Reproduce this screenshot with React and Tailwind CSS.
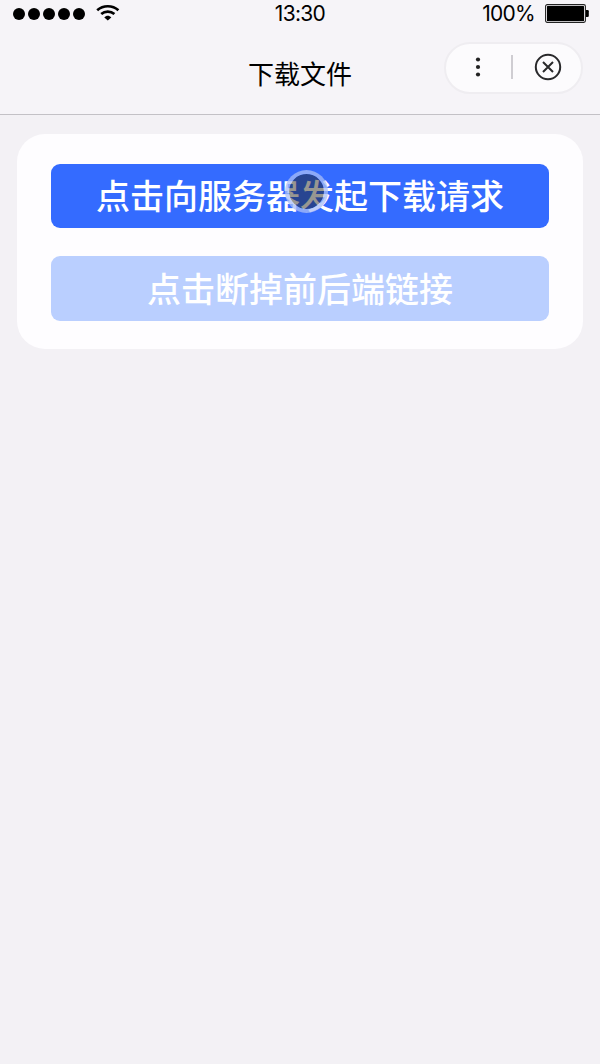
import React from "react";

const WifiIcon = () => (
  <svg width="24" height="18" viewBox="0 0 24 18" fill="none">
    <path d="M1.2 6.2C7.2 0.9 16.4 0.9 22.4 6.2" stroke="#000" strokeWidth="2.7" />
    <path d="M5.2 10C9 6.8 14.6 6.8 18.4 10" stroke="#000" strokeWidth="2.7" />
    <path d="M8.3 13.4C10.3 11.3 13.3 11.3 15.3 13.4L11.8 16.6Z" fill="#000" />
  </svg>
);

const BatteryIcon = () => (
  <svg width="45" height="20" viewBox="0 0 45 20" fill="none">
    <rect x="0.6" y="0.6" width="39.8" height="17.8" rx="1.6" stroke="#222" strokeWidth="1.1" />
    <rect x="2" y="2" width="37" height="15" rx="0.5" fill="#000" />
    <path d="M41 6h1.6q1.2 0 1.2 1.2v4.6q0 1.2-1.2 1.2H41z" fill="#000" />
  </svg>
);

const StatusBar = () => (
  <div className="grid h-7 grid-cols-3 items-center text-[21px] leading-7 tracking-[-0.7px] text-black">
    <div className="flex items-center pl-[13px]">
      <div className="-mt-px flex gap-[3px]">
        {[0, 1, 2, 3, 4].map((dot) => (
          <span key={dot} className="h-3 w-3 rounded-full bg-black"></span>
        ))}
      </div>
      <div className="ml-[11px] -mt-[3px]">
        <WifiIcon />
      </div>
    </div>
    <div className="text-center">13:30</div>
    <div className="flex items-center justify-end gap-[10px] pr-[10px]">
      <span>100%</span>
      <BatteryIcon />
    </div>
  </div>
);

const Capsule = () => (
  <div className="flex h-[52px] w-[139px] items-center rounded-full border-2 border-[#efedf1] bg-[#fcfbfd] pb-[2px]">
    <button className="flex w-[65px] justify-center pr-[2px]">
      <svg width="6" height="20" viewBox="0 0 6 20" fill="#222">
        <circle cx="3" cy="2.5" r="2.1" />
        <circle cx="3" cy="10" r="2.1" />
        <circle cx="3" cy="17.5" r="2.1" />
      </svg>
    </button>
    <span className="h-6 w-[1.5px] bg-[#cfcdd2]"></span>
    <button className="flex flex-1 justify-center pl-[3px]">
      <svg width="28" height="28" viewBox="0 0 28 28" fill="none" stroke="#29292b" strokeWidth="2">
        <circle cx="14" cy="14" r="12.2" />
        <path d="M9 9l10 10M19 9L9 19" />
      </svg>
    </button>
  </div>
);

const NavBar = () => (
  <div className="grid h-[87px] grid-cols-[1fr_auto_1fr] items-start border-b border-[#c3c1c6]">
    <span></span>
    <h1 className="pt-[28px] text-[26px] leading-[38px] text-black">下载文件</h1>
    <div className="flex justify-end pt-[14px] pr-[17px]">
      <Capsule />
    </div>
  </div>
);

const App = () => {
  return (
    <div className="min-h-screen bg-[#f3f1f5] font-['Inter','Noto_Sans_CJK_SC',sans-serif]">
      <header className="bg-[#f6f4f8]">
        <StatusBar />
        <NavBar />
      </header>

      <main className="px-[17px] pt-[19px]">
        <div className="flex h-[215px] flex-col gap-7 rounded-[28px] bg-[#fefdff] px-[34px] pt-[30px]">
          <button className="relative h-16 rounded-[9px] bg-[#346bff] text-[34px] leading-[66px] font-medium text-white">
            点击向服务器发起下载请求
            {/* touch indicator */}
            <span className="absolute top-[6px] left-[234px] h-[43px] w-[43px] rounded-full border-4 border-[#a9bdf5]/75 bg-[#1b180c]/45 bg-clip-padding"></span>
          </button>
          <button className="h-[65px] rounded-[9px] bg-[#bacfff] text-[34px] leading-[67px] font-medium text-white">
            点击断掉前后端链接
          </button>
        </div>
      </main>
    </div>
  );
};

export default App;
